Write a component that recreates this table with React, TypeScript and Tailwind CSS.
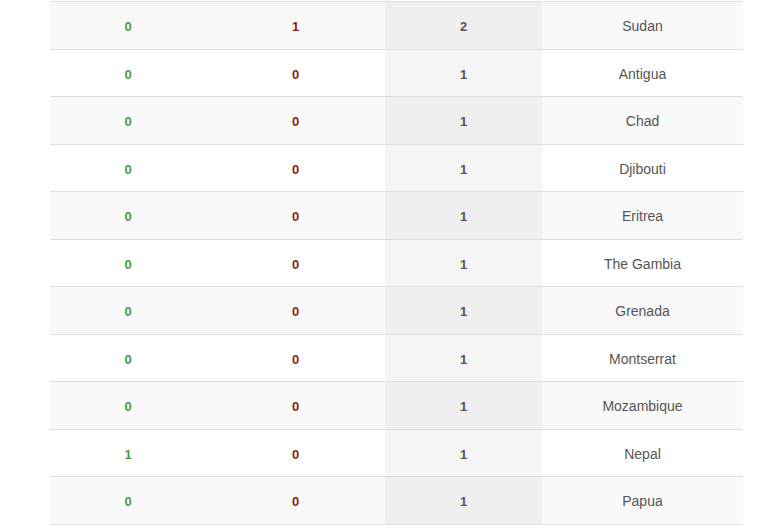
const rows: [number, number, number, string][] = [
  [0, 1, 2, "Sudan"],
  [0, 0, 1, "Antigua"],
  [0, 0, 1, "Chad"],
  [0, 0, 1, "Djibouti"],
  [0, 0, 1, "Eritrea"],
  [0, 0, 1, "The Gambia"],
  [0, 0, 1, "Grenada"],
  [0, 0, 1, "Montserrat"],
  [0, 0, 1, "Mozambique"],
  [1, 0, 1, "Nepal"],
  [0, 0, 1, "Papua"],
]

export default function App() {
  return (
    <div className="w-[780px] h-[525px] overflow-hidden bg-white pl-[50px] pt-[1px] font-['Liberation_Sans',Arial,sans-serif]">
      <table className="w-[693px] border-collapse table-fixed border-b border-[#dddddd]">
        <colgroup>
          <col className="w-[156px]" />
          <col className="w-[179px]" />
          <col className="w-[157px]" />
          <col className="w-[201px]" />
        </colgroup>
        <tbody>
          {rows.map((r, i) => {
            const odd = i % 2 === 0
            return (
              <tr key={r[3]} className={`h-[47.5px] border-t border-[#dddddd] ${odd ? "bg-[#f9f9f9]" : "bg-white"}`}>
                <td className="pt-[3px] text-center text-[13px] font-bold text-[#4b9a3e]">{r[0]}</td>
                <td className="pt-[3px] text-center text-[13px] font-bold text-[#8b1e14]">{r[1]}</td>
                <td className={`pt-[3px] text-center text-[13px] font-bold text-[#555555] ${odd ? "bg-[#efefef]" : "bg-[#f5f5f5]"}`}>
                  {r[2]}
                </td>
                <td className="pt-[3px] text-center text-[14px] text-[#555555]">{r[3]}</td>
              </tr>
            )
          })}
        </tbody>
      </table>
    </div>
  )
}
